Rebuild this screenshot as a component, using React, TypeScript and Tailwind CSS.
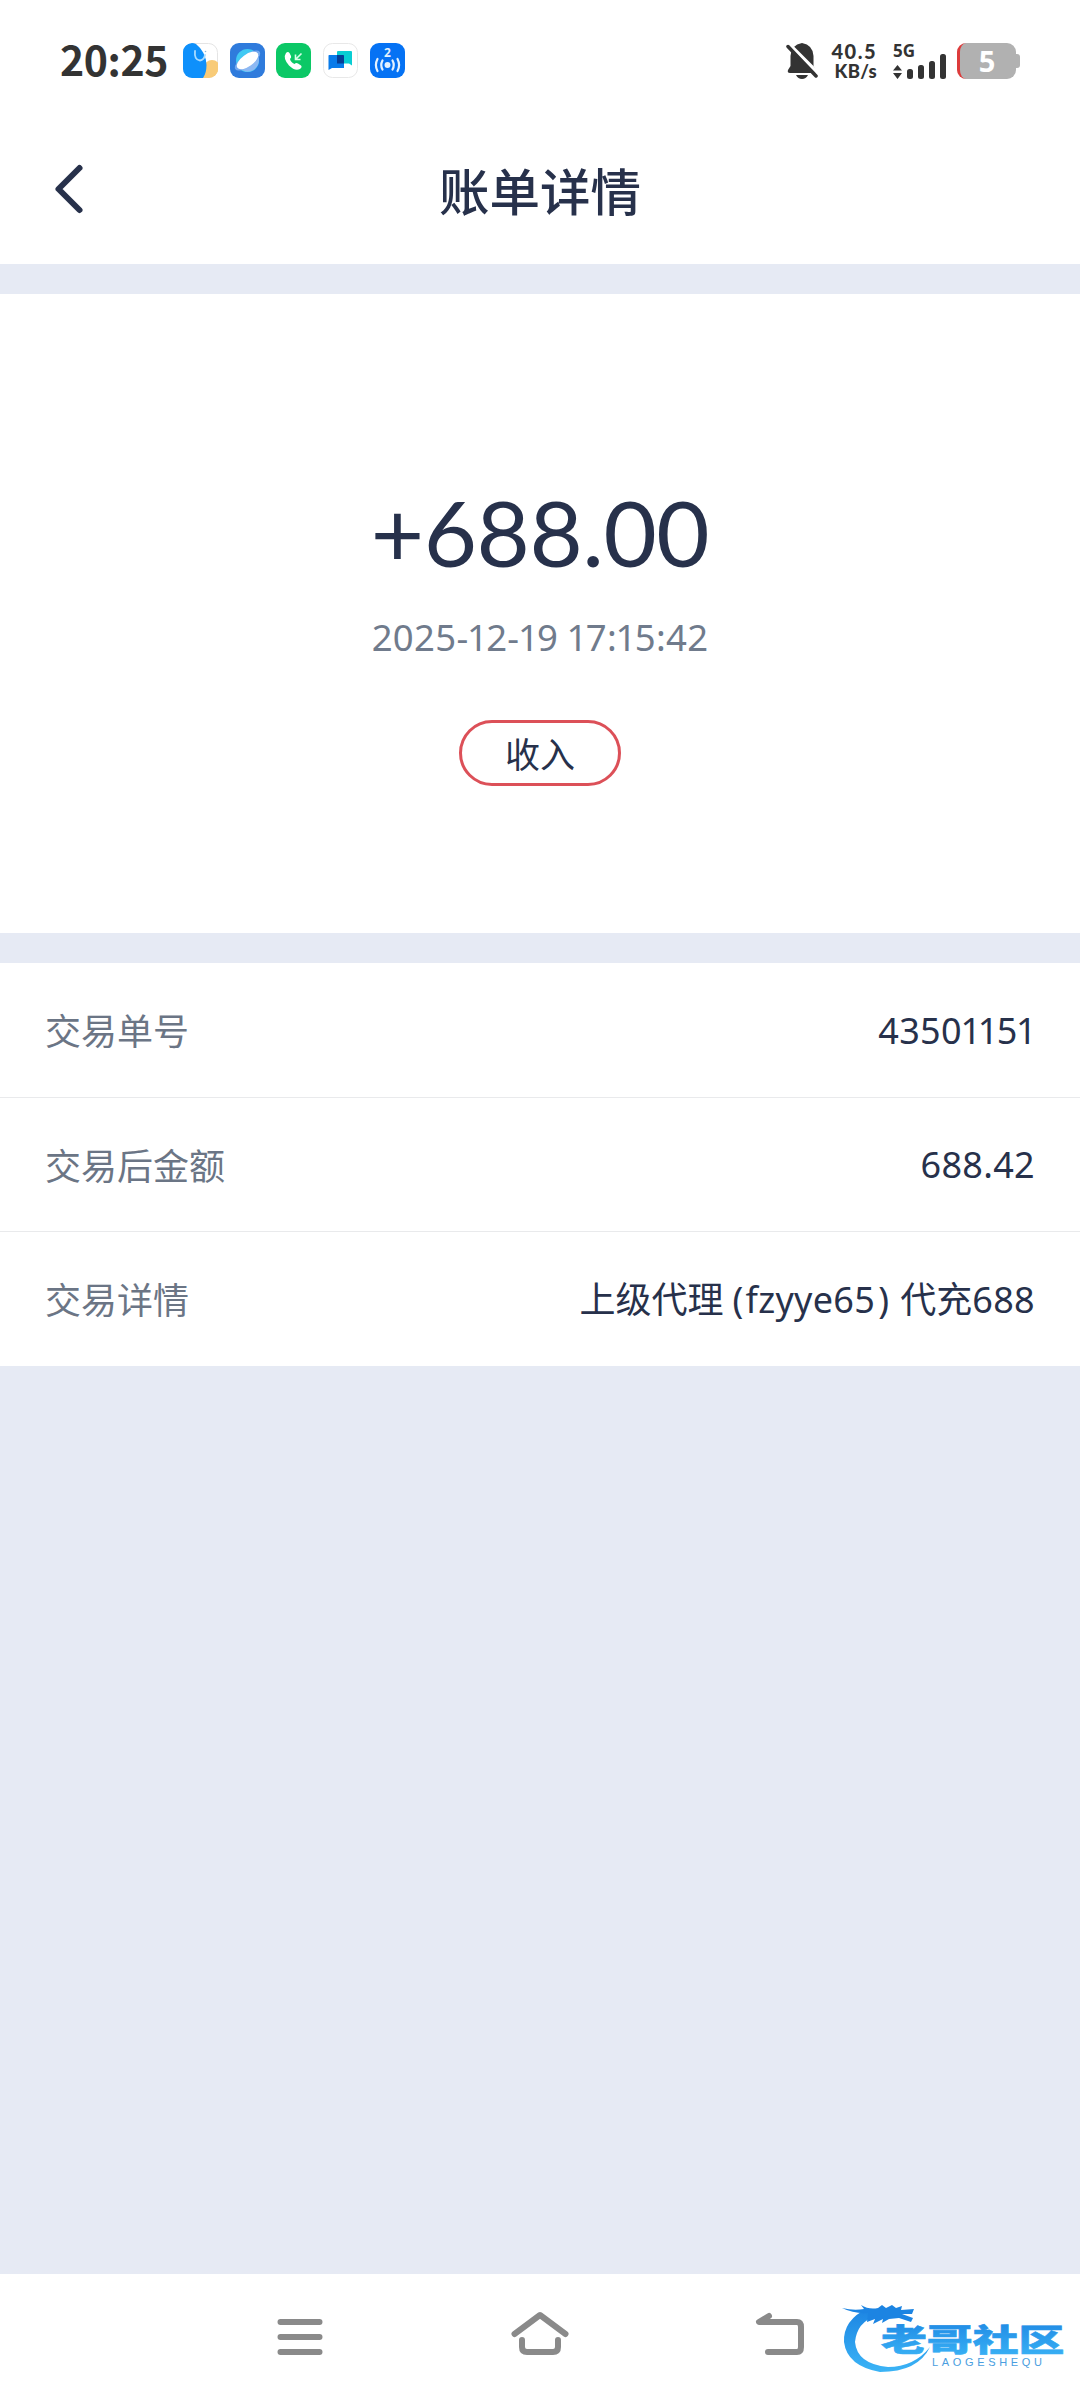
import type { ReactNode } from "react";

const rows = [
  { id: "order-no", label: "交易单号", value: <Digits text="43501151" /> },
  { id: "balance", label: "交易后金额", value: <Digits text="688.42" /> },
  {
    id: "detail",
    label: "交易详情",
    value: (
      <>
        上级代理
        <span className="ml-[9px] mr-[11px] font-['Noto_Sans'] tracking-[0.3px]">
          <span className="mr-[2px]">(</span>fzyye65<span className="ml-[3px]">)</span>
        </span>
        代充
        <Digits text="688" />
      </>
    ),
  },
];

// the figure 1 is set narrower than the other digits
function Digits({ text }: { text: string }) {
  return (
    <span className="font-['Noto_Sans'] tracking-[0.3px]">
      {text.split("").map((c, i) => (
        <span key={i} className={c === "1" ? "-ml-[1.5px] -mr-[2px]" : ""}>
          {c}
        </span>
      ))}
    </span>
  );
}

function AppIcons() {
  return (
    <div id="status-app-icons" className="flex items-center gap-[11.700px]">
      <svg width="35" height="35" viewBox="0 0 35 35">
        <defs>
          <clipPath id="app-clip">
            <rect width="35" height="35" rx="9" />
          </clipPath>
        </defs>
        <rect x="0.5" y="0.5" width="34" height="34" rx="9" fill="#fff" stroke="#e4e4e4" />
        <g clipPath="url(#app-clip)">
          <circle cx="29" cy="25" r="8" fill="#f8cb78" />
          <rect x="18" y="26" width="17" height="10" fill="#f8cb78" />
          <path d="M0 5Q6 -2 13 1Q23 9 23.500 22Q23.500 30 20 35H0Z" fill="#0e90fb" />
        </g>
        <path d="M12 8Q11 17 17 17.500Q21 17 22 12" fill="none" stroke="#a9dcff" strokeWidth="1.800" strokeLinecap="round" />
        <circle cx="22.500" cy="8.500" r="0.800" fill="#8cb8da" />
      </svg>
      <svg width="35" height="35" viewBox="0 0 35 35">
        <rect width="35" height="35" rx="9" fill="#2f7bdc" />
        <circle cx="17.500" cy="17.500" r="11.500" fill="#41c9f3" />
        <path d="M28.500 14A11.500 11.500 0 0 1 9 25Z" fill="#8db8f3" />
        <ellipse cx="17.500" cy="17.500" rx="15" ry="6" transform="rotate(-36 17.500 17.500)" fill="#74a8ee" />
        <ellipse cx="17.500" cy="17.500" rx="12.500" ry="6" transform="rotate(-36 17.500 17.500)" fill="#fff" />
      </svg>
      <svg width="35" height="35" viewBox="0 0 35 35">
        <rect width="35" height="35" rx="9" fill="#0bc866" />
        <path
          d="M10 10Q12 8 13.500 10L15 13Q15.700 14.500 14 16Q14.500 19 18.500 21Q20 19.500 22 20.500L25 22.500Q26.500 24 24 26Q19 28.500 13 22.500Q6.500 15 10 10Z"
          fill="#fff"
        />
        <path d="M25.500 10.500L20 16M19.500 11.500V16.500H24.500" fill="none" stroke="#d8ffe9" strokeWidth="1.600" />
      </svg>
      <svg width="35" height="35" viewBox="0 0 35 35">
        <rect x="0.500" y="0.500" width="34" height="34" rx="9" fill="#fff" stroke="#e8e8e8" />
        <path d="M15 8H28Q29 8 29 9V22.500L26 20.500H14V9Q14 8 15 8Z" fill="#09cdd3" />
        <path d="M6 12H20Q21 12 21 13V25H9L5.500 27V13Q5.500 12 6 12Z" fill="#087bea" />
        <path d="M14 12H20Q21 12 21 13V20.500H14Z" fill="#063e95" />
      </svg>
      <svg width="35" height="35" viewBox="0 0 35 35">
        <rect width="35" height="35" rx="9" fill="#0572f4" />
        <text x="17.500" y="13.500" textAnchor="middle" fontSize="12" fontWeight="700" fontFamily="Noto Sans, sans-serif" fill="#e4f2ff">
          2
        </text>
        <circle cx="17.500" cy="22" r="3" fill="#e4f2ff" />
        <path
          d="M12.500 17.500Q10 22 12.500 26.500M22.500 17.500Q25 22 22.500 26.500M7.500 16Q4.300 22 7.500 28M27.500 16Q30.700 22 27.500 28"
          fill="none"
          stroke="#e4f2ff"
          strokeWidth="2.200"
          strokeLinecap="round"
        />
      </svg>
    </div>
  );
}

function StatusBar() {
  return (
    <div id="status-bar" className="flex h-[121px] items-center justify-between pl-[60px] pr-[60px] text-[#333333]">
      <div id="status-left" className="flex items-center">
        <span id="status-time" className="w-[123px] whitespace-nowrap pb-[4px] font-['Noto_Sans_CJK_SC'] text-[41px] font-bold leading-none tracking-[-0.4px]">
          20:25
        </span>
        <AppIcons />
      </div>

      <div id="status-right" className="flex items-center">
        <svg width="32" height="37" viewBox="0 0 32 37" className="mr-[11px]">
          <path d="M4 31Q1 31 2 28L4.500 24V14Q5 3 16 1Q27 3 27.500 14V24L30 28Q31 31 28 31Z" fill="#333" />
          <path d="M10 33H22Q20 37 16 37Q12 37 10 33Z" fill="#333" />
          <path d="M3 2L33 32" stroke="#fff" strokeWidth="3.500" />
          <path d="M2 4.500L30 34" stroke="#333" strokeWidth="3.500" strokeLinecap="round" />
        </svg>
        <div id="status-speed" className="mr-[16px] flex w-[48px] flex-col items-end whitespace-nowrap font-['Lato'] font-black">
          <span className="text-[20px] leading-[20px] tracking-[1.500px]">40.5</span>
          <span className="text-[18.5px] leading-[20px] tracking-[0.3px]">KB/s</span>
        </div>
        <div id="status-signal" className="mr-[10px] flex h-[37px] flex-col justify-between">
          <span className="whitespace-nowrap font-['Noto_Sans'] text-[17px] font-bold leading-[17px]">5G</span>
          <svg width="54" height="26" viewBox="0 0 54 26" className="-mt-[6px]">
            <path d="M4.500 12L9 17.500H0ZM4.500 26L0 20H9Z" fill="#333" />
            <rect x="14" y="16" width="6" height="10" rx="2.500" fill="#333" />
            <rect x="25" y="12" width="6" height="14" rx="2.500" fill="#333" />
            <rect x="36" y="8" width="6" height="18" rx="2.500" fill="#333" />
            <rect x="47" y="1" width="6" height="25" rx="2.500" fill="#333" />
          </svg>
        </div>
        <div id="status-battery" className="flex items-center">
          <div className="flex h-[36px] w-[59px] items-center justify-center overflow-hidden rounded-[9px] border-l-[3px] border-[#dd3b3b] bg-[#b1b1b1] pr-[2px]">
            <span className="font-['Noto_Sans'] text-[29px] font-bold leading-none text-white">5</span>
          </div>
          <div className="h-[14px] w-[4px] rounded-r-[3px] bg-[#b1b1b1]" />
        </div>
      </div>
    </div>
  );
}

function Section({ id, className, children }: { id: string; className: string; children: ReactNode }) {
  return (
    <section id={id} className={`bg-white ${className}`}>
      {children}
    </section>
  );
}

function NavBar() {
  return (
    <nav id="nav-bar" className="flex h-[126px] items-center bg-white pl-[270px]">
      <svg width="60" height="60" viewBox="0 0 60 60" fill="none" stroke="#8a8a8a" strokeWidth="6" strokeLinecap="round">
        <path d="M10.500 15H49.500M10.500 30H49.500M10.500 45H49.500" />
      </svg>
      <svg width="60" height="60" viewBox="0 0 60 60" fill="none" stroke="#8a8a8a" strokeWidth="6" strokeLinecap="round" strokeLinejoin="round" className="ml-[180px]">
        <path d="M4.500 27L30 8L55.500 27" />
        <path d="M12 33V40Q12 45 17 45H43Q48 45 48 40V33" />
      </svg>
      <svg width="60" height="60" viewBox="0 0 60 60" fill="none" stroke="#8a8a8a" strokeWidth="6" strokeLinecap="round" strokeLinejoin="round" className="ml-[180px]">
        <path d="M19 9L9 15H47Q51 15 51 20V40Q51 45 47 45H18" />
      </svg>
      <svg id="site-logo" width="230" height="86" viewBox="0 0 230 86" className="ml-[30px]">
        <defs>
          <linearGradient id="logo-blue" x1="0" y1="0" x2="0" y2="1">
            <stop offset="0" stopColor="#1c84e2" />
            <stop offset="1" stopColor="#3bb4f6" />
          </linearGradient>
        </defs>
        <path
          d="M28 14Q3 26 4 48Q7 72 40 78Q78 78 90 53Q74 73 48 73Q17 70 15 48Q17 28 36 22Z"
          fill="url(#logo-blue)"
        />
        <path
          d="M2 14Q14 17 24 15L21 11Q29 16 38 14L42 11L46 14L52 11L56 14L62 12L61 16L74 15L72 20L62 20L73 24L71 28L59 24L49 25L42 29L43 25L33 30L35 25L27 28L28 19Q14 20 2 14Z"
          fill="#1c84e2"
        />
        <g transform="translate(41 57) scale(1.48 1)">
          <text fontSize="31" fontWeight="900" fontFamily="Noto Sans CJK SC, sans-serif" fill="url(#logo-blue)" stroke="url(#logo-blue)" strokeWidth="0.600">
            老哥社区
          </text>
        </g>
        <text x="92" y="72" fontSize="11" textLength="110" fontFamily="Liberation Sans, sans-serif" fill="#4a9ee0">
          LAOGESHEQU
        </text>
      </svg>
    </nav>
  );
}

export default function App() {
  return (
    <div
      id="bill-page"
      className="flex h-[2400px] w-[1080px] flex-col overflow-hidden bg-[#e6eaf4] font-['Noto_Sans_CJK_SC',sans-serif] text-[#27314b]"
    >
      <Section id="bill-header" className="h-[264px]">
        <StatusBar />
        <div id="bill-title-bar" className="grid h-[136px] grid-cols-[1fr_auto_1fr] items-center">
          <svg width="40" height="60" viewBox="0 0 40 60" className="ml-[49px]" fill="none" stroke="#27314b" strokeWidth="6" strokeLinecap="round" strokeLinejoin="round">
            <path d="M30.500 9L9.500 30L30.500 51" />
          </svg>
          <h1 id="bill-title" className="text-[50.5px] font-medium leading-[60px]">账单详情</h1>
        </div>
      </Section>

      <Section id="bill-summary" className="mt-[30px] flex h-[639px] flex-col items-center pt-[192px]">
        <p id="bill-amount" className="font-['Lato'] text-[92px] leading-[92px] tracking-[-0.5px]">+688.00</p>
        <p id="bill-time" className="mt-[36px] text-[36.5px] leading-[44px] text-[#707b8c]">
          <Digits text="2025-12-19 17:15:42" />
        </p>
        <span
          id="bill-type"
          className="mt-[61px] flex h-[66px] w-[162px] items-center justify-center rounded-full border-[3px] border-[#dc5058] pb-[2px] text-[35px] leading-none"
        >
          收入
        </span>
      </Section>

      <Section id="bill-rows" className="mt-[30px] h-[403px]">
        {rows.map((row) => (
          <div
            key={row.id}
            id={`bill-row-${row.id}`}
            className="flex h-[134px] items-center justify-between border-b border-[#e9eaec] px-[45px] pb-[2px] text-[36px] leading-[54px] first:h-[135px] last:border-b-0"
          >
            <span className="text-[#6b7585]">{row.label}</span>
            <span>{row.value}</span>
          </div>
        ))}
      </Section>

      <div className="flex-1" />
      <NavBar />
    </div>
  );
}
